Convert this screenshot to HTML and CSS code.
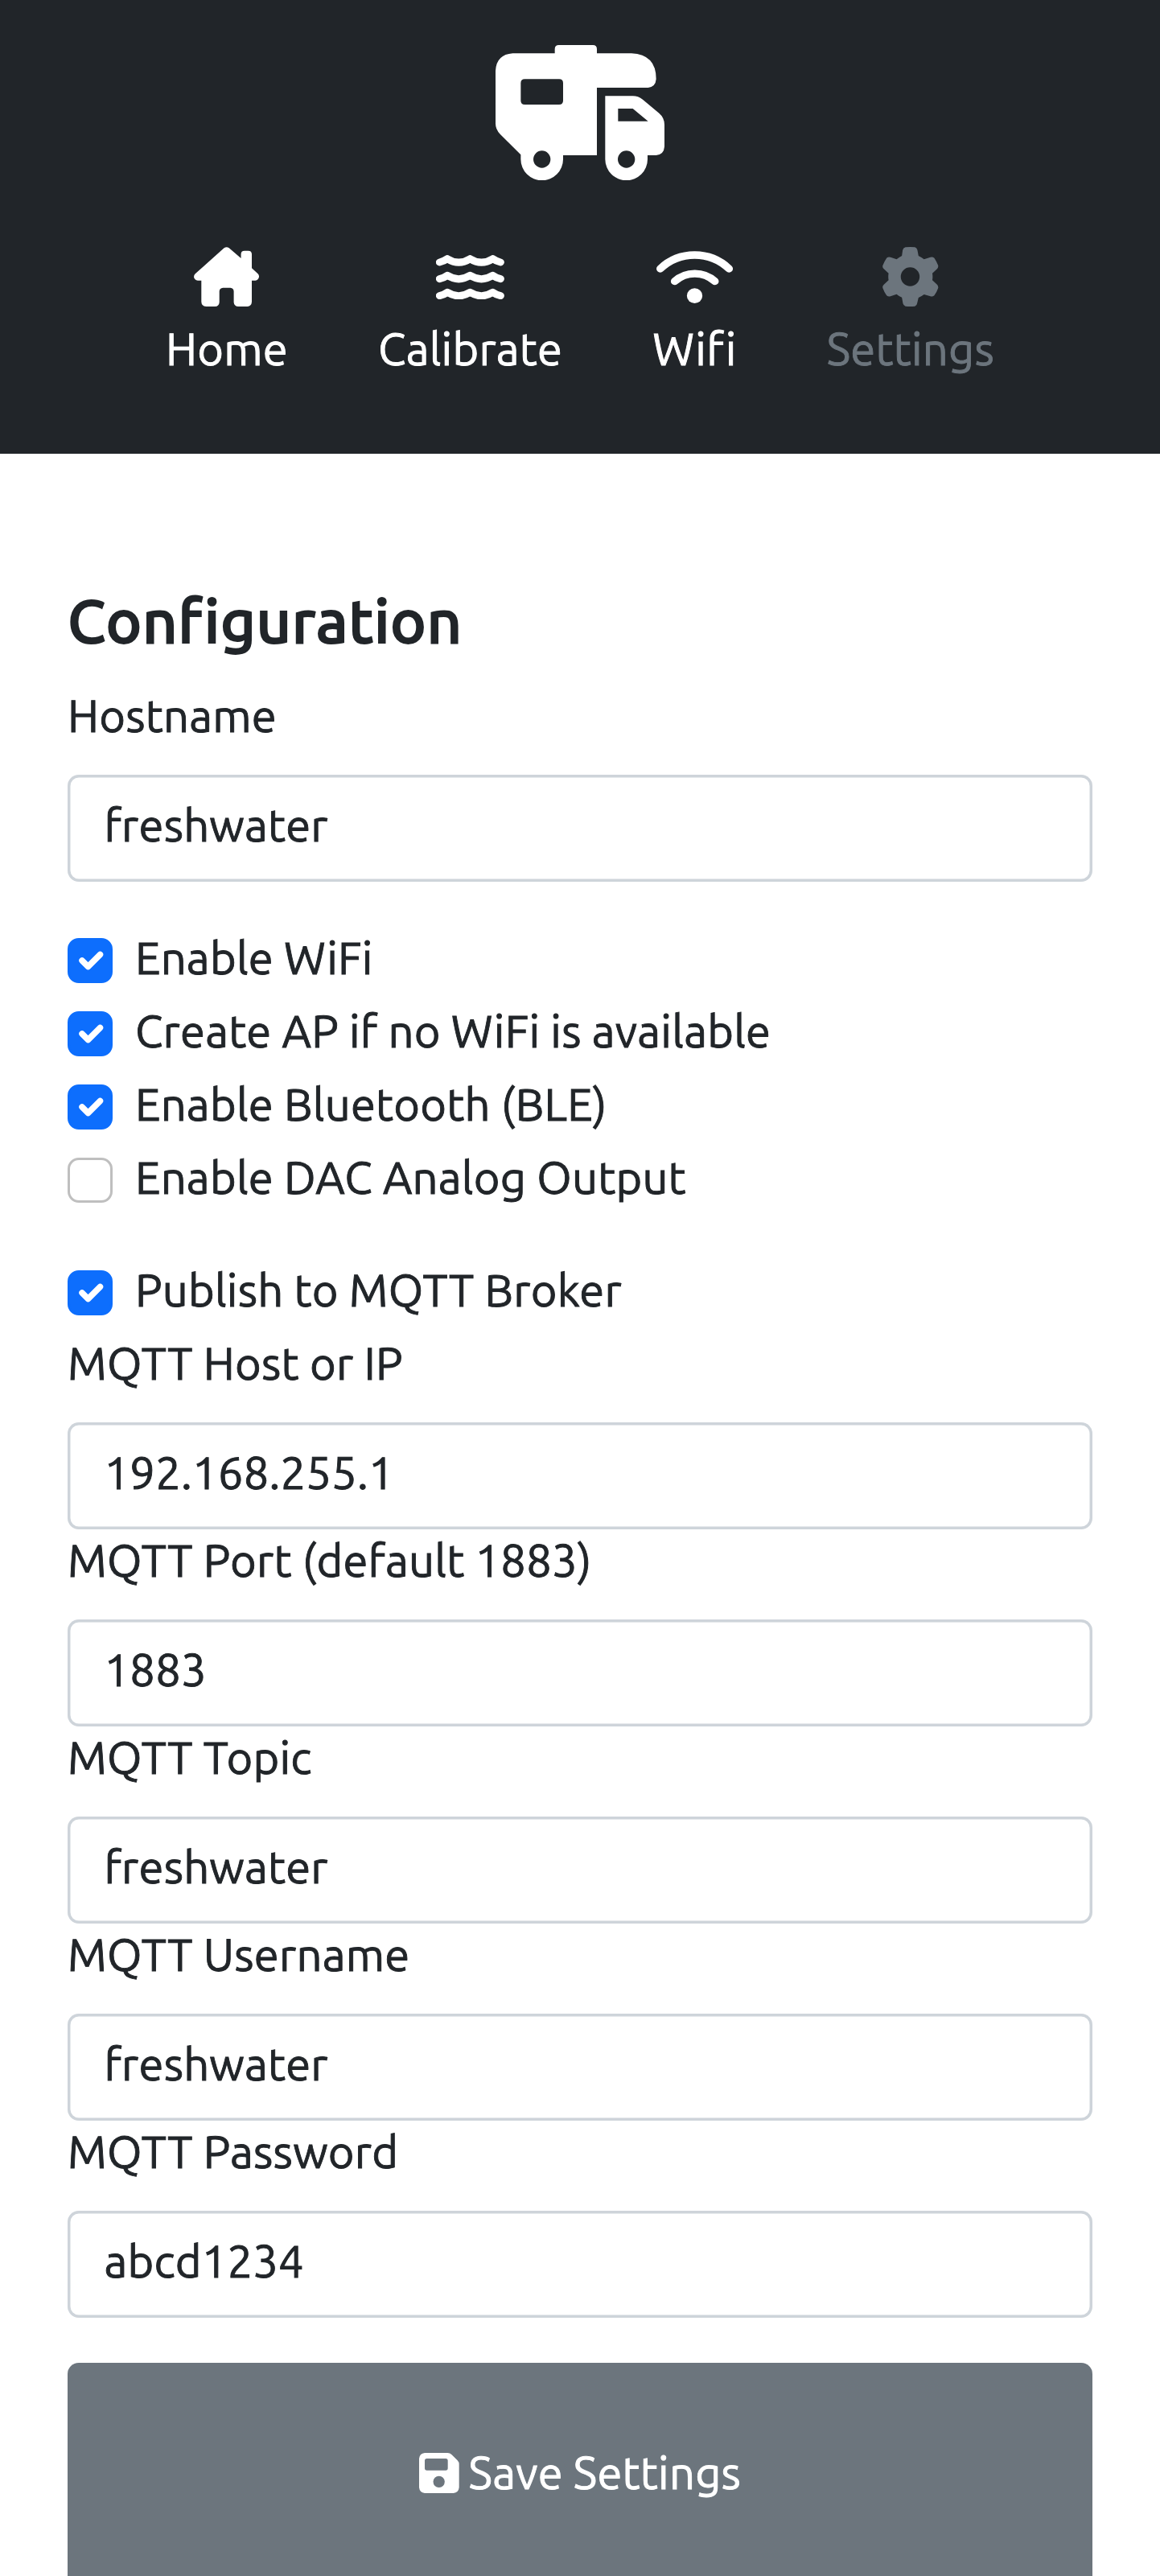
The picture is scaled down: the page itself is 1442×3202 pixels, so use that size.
FILE: index.html
```html
<!DOCTYPE html>
<html lang="en">
<head>
<meta charset="utf-8">
<meta name="viewport" content="width=device-width, initial-scale=1">
<title>Settings</title>
<link rel="stylesheet" href="styles.css">
</head>
<body>
<header class="header">
  <svg class="logo" viewBox="108 77 630 505" fill="currentColor" aria-hidden="true">
    <path fill-rule="evenodd" d="M172 108H329V92Q329 77 344 77H471Q486 77 486 92V108H615Q707 112 707 204Q705 233 677 236H486V488H360V503A79 79 0 0 1 202 503V486L125 409Q108 391 108 370V172Q112 112 172 108ZM217 204Q202 204 202 219V284Q202 299 217 299H345Q360 299 360 284V219Q360 204 345 204ZM281 471A32 32 0 1 0 281 535A32 32 0 1 0 281 471Z"/>
    <path fill-rule="evenodd" d="M517 267H620Q640 267 657 280L718 331Q738 348 738 374V456Q736 486 707 488H675V503A79 79 0 0 1 517 503ZM565 314V361H677L620 314ZM596 471A32 32 0 1 0 596 535A32 32 0 1 0 596 471Z"/>
  </svg>
  <nav class="nav">
    <a class="nav-item" href="#">
      <svg class="icon icon-home" viewBox="148 53 236 222" preserveAspectRatio="none" fill="currentColor"><path d="M257 57Q266 50 275 57L318 95V80Q318 67 331 67H344Q357 67 357 80V132L379 153Q384 158 383 165Q381 177 370 178H357V258Q356 274 341 275H309Q293 274 292 259V218Q291 206 280 205H253Q241 206 240 218V259Q239 274 224 275H192Q176 274 175 258V178H162Q150 177 148 165Q148 158 153 153Z"/></svg>
      <span>Home</span>
    </a>
    <a class="nav-item" href="#">
      <svg class="icon icon-water" viewBox="1023 81 246 166" preserveAspectRatio="none" fill="none" stroke="currentColor" stroke-width="27" stroke-linecap="round" stroke-linejoin="round"><path d="M1036 108Q1052 104 1064 95Q1105 122 1146 95Q1187 122 1228 95Q1240 104 1256 108M1036 170Q1052 166 1064 157Q1105 184 1146 157Q1187 184 1228 157Q1240 166 1256 170M1036 233Q1052 229 1064 220Q1105 247 1146 220Q1187 247 1228 220Q1240 229 1256 233"/></svg>
      <span>Calibrate</span>
    </a>
    <a class="nav-item" href="#">
      <svg class="icon icon-wifi" viewBox="276 66 277 196" preserveAspectRatio="none" fill="none" stroke="currentColor" stroke-width="28" stroke-linecap="round"><path d="M290 132A180 185 0 0 1 538 132M342 179A108 111 0 0 1 487 179"/><circle cx="414" cy="233" r="28" fill="currentColor" stroke="none"/></svg>
      <span>Wifi</span>
    </a>
    <a class="nav-item active" href="#">
      <svg class="icon icon-gear" viewBox="1097 53 202 222" preserveAspectRatio="none" fill="currentColor"><path fill-rule="evenodd" d="M1170 64Q1172 56 1180 54Q1198 52 1214 54Q1221 56 1223 64L1227 86Q1238 91 1247 99L1270 91Q1278 89 1284 94Q1293 108 1298 122Q1299 130 1294 135L1277 151Q1279 164 1277 177L1294 193Q1299 198 1298 206Q1293 221 1284 234Q1278 239 1270 237L1247 230Q1238 237 1227 242L1222 264Q1221 272 1214 274Q1198 276 1180 274Q1173 272 1171 264L1167 241Q1157 237 1148 229L1126 237Q1118 239 1112 234Q1103 221 1098 206Q1096 198 1102 193L1119 177Q1117 164 1119 151L1102 135Q1096 130 1098 122Q1103 108 1112 94Q1118 89 1126 91L1148 99Q1157 91 1167 86ZM1197 129A34 35 0 1 0 1197 199A34 35 0 1 0 1197 129Z"/></svg>
      <span>Settings</span>
    </a>
  </nav>
</header>
<main class="main">
  <h4 class="title">Configuration</h4>
  <label class="label" for="hostname">Hostname</label>
  <input class="input" id="hostname" type="text" value="freshwater">
  <div class="checks">
    <label class="check"><input class="box" type="checkbox" checked><span>Enable WiFi</span></label>
    <label class="check"><input class="box" type="checkbox" checked><span>Create AP if no WiFi is available</span></label>
    <label class="check"><input class="box" type="checkbox" checked><span>Enable Bluetooth (BLE)</span></label>
    <label class="check"><input class="box" type="checkbox"><span>Enable DAC Analog Output</span></label>
  </div>
  <label class="check"><input class="box" type="checkbox" checked><span>Publish to MQTT Broker</span></label>
  <label class="label" for="host">MQTT Host or IP</label>
  <input class="input" id="host" type="text" value="192.168.255.1">
  <label class="label" for="port">MQTT Port (default 1883)</label>
  <input class="input" id="port" type="text" value="1883">
  <label class="label" for="topic">MQTT Topic</label>
  <input class="input" id="topic" type="text" value="freshwater">
  <label class="label" for="user">MQTT Username</label>
  <input class="input" id="user" type="text" value="freshwater">
  <label class="label" for="pass">MQTT Password</label>
  <input class="input" id="pass" type="text" value="abcd1234">
  <button class="save" type="button">
    <svg class="icon-save" viewBox="124 384 149 150" fill="currentColor" aria-hidden="true"><path fill-rule="evenodd" d="M145 384H230Q239 384 245 390L267 412Q273 418 273 427V513Q271 532 252 534H145Q126 532 124 513V405Q126 386 145 384ZM153 405Q145 405 145 413V441Q145 449 153 449H223Q231 449 231 441V413Q231 405 223 405ZM198 470A21.500 21.500 0 1 0 198 513A21.500 21.500 0 1 0 198 470Z"/></svg>
    <span>Save Settings</span>
  </button>
</main>
</body>
</html>
```
FILE: styles.css
```css
* { box-sizing: border-box; }

body {
  margin: 0;
  height: 3202px;
  overflow: hidden;
  background: #fff;
  color: #212529;
  font: 56px/78px "Ubuntu", "Noto Sans", sans-serif;
  letter-spacing: 0.24px;
  -webkit-text-stroke: 0.9px currentColor;
}

.header {
  display: flex;
  flex-direction: column;
  align-items: center;
  height: 563.5px;
  padding-top: 55.7px;
  background: #212529;
  color: #fff;
}

.logo { width: 210px; height: 168.3px; }

.nav {
  display: flex;
  justify-content: center;
  gap: 112px;
  margin-top: 83.5px;
}

.nav-item {
  display: flex;
  flex-direction: column;
  align-items: center;
  line-height: 84px;
  color: #fff;
  text-decoration: none;
}

.nav-item.active { color: #6c757d; }

.icon { display: block; }
.icon-home { width: 81.3px; height: 74px; margin-bottom: 10.5px; }
.icon-water { width: 84.7px; height: 55.3px; margin: 9.5px 0 19.7px; }
.icon-wifi { width: 95.4px; height: 65.3px; margin: 4.5px 0 14.7px; }
.icon-gear { width: 69.6px; height: 74px; margin-bottom: 10.5px; }

.main { padding: 161px 84px 0; }

.title {
  margin: 0 0 35px;
  font-size: 75.7px;
  font-weight: 500;
  line-height: 91px;
  letter-spacing: 0.6px;
  -webkit-text-stroke-width: 1.9px;
}

.label {
  display: block;
  margin-bottom: 34px;
}

.input {
  display: block;
  width: 100%;
  height: 133px;
  padding: 21px 45.5px 28px;
  border: 0;
  border-radius: 14px;
  box-shadow: inset 0 0 0 3.5px #ced4da;
  background: #fff;
  color: inherit;
  font: inherit;
  letter-spacing: inherit;
}

.checks { margin: 56px 0; }

.check {
  display: flex;
  gap: 28px;
  height: 84px;
  margin-bottom: 7px;
}

.box {
  appearance: none;
  flex: none;
  width: 56px;
  height: 56px;
  margin: 14px 0 0;
  border: 3.5px solid #bfbfbf;
  border-radius: 14px;
  background: #fff;
}

.box:checked {
  border-color: #0d6efd;
  background: #0d6efd url("data:image/svg+xml,%3Csvg xmlns='http://www.w3.org/2000/svg' viewBox='0 0 20 20'%3E%3Cpath fill='none' stroke='%23fff' stroke-linecap='round' stroke-linejoin='round' stroke-width='3' d='m6 10 3 3 6-6'/%3E%3C/svg%3E") center / contain no-repeat;
}

.save {
  display: flex;
  justify-content: center;
  gap: 12px;
  width: 100%;
  height: 287px;
  margin-top: 56px;
  padding: 98px 0;
  border: 0;
  border-radius: 14px;
  background: #6c757d;
  color: #fff;
  font: inherit;
  letter-spacing: inherit;
}

.icon-save { width: 49.7px; height: 50px; margin-top: 14px; }
```
